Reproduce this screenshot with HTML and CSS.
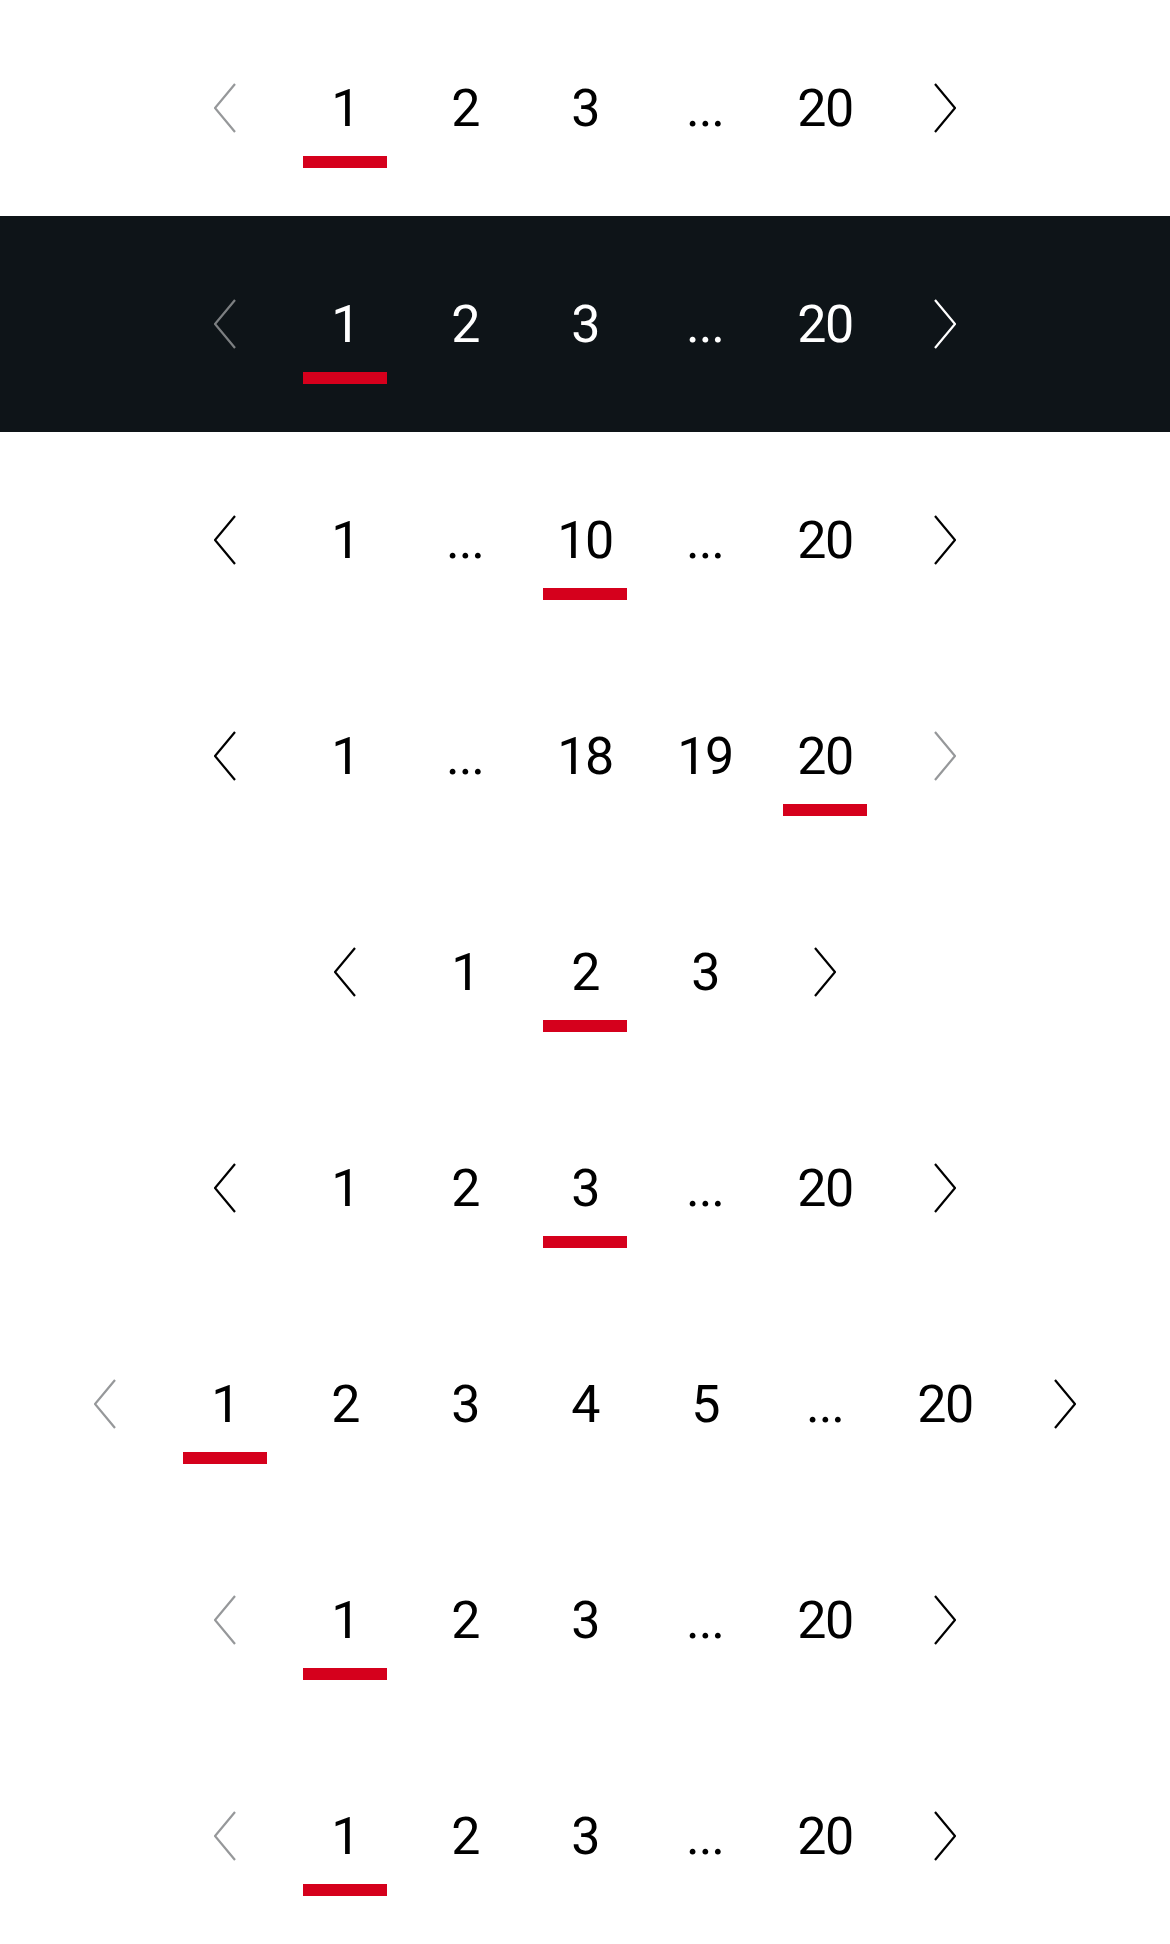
FILE: index.html
```html
<!DOCTYPE html>
<html lang="en">
<head>
<meta charset="utf-8">
<title>Pagination</title>
<link rel="stylesheet" href="styles.css">
</head>
<body>
<main class="page">

  <nav class="pagination">
    <span class="item arrow disabled"><svg class="chev" viewBox="0 0 22 50"><path d="M21 1 L1 25 L21 49"/></svg></span>
    <span class="item current">1</span>
    <span class="item">2</span>
    <span class="item">3</span>
    <span class="item ellipsis">...</span>
    <span class="item">20</span>
    <span class="item arrow"><svg class="chev" viewBox="0 0 22 50"><path d="M1 1 L21 25 L1 49"/></svg></span>
  </nav>

  <nav class="pagination dark">
    <span class="item arrow disabled"><svg class="chev" viewBox="0 0 22 50"><path d="M21 1 L1 25 L21 49"/></svg></span>
    <span class="item current">1</span>
    <span class="item">2</span>
    <span class="item">3</span>
    <span class="item ellipsis">...</span>
    <span class="item">20</span>
    <span class="item arrow"><svg class="chev" viewBox="0 0 22 50"><path d="M1 1 L21 25 L1 49"/></svg></span>
  </nav>

  <nav class="pagination">
    <span class="item arrow"><svg class="chev" viewBox="0 0 22 50"><path d="M21 1 L1 25 L21 49"/></svg></span>
    <span class="item">1</span>
    <span class="item ellipsis">...</span>
    <span class="item current">10</span>
    <span class="item ellipsis">...</span>
    <span class="item">20</span>
    <span class="item arrow"><svg class="chev" viewBox="0 0 22 50"><path d="M1 1 L21 25 L1 49"/></svg></span>
  </nav>

  <nav class="pagination">
    <span class="item arrow"><svg class="chev" viewBox="0 0 22 50"><path d="M21 1 L1 25 L21 49"/></svg></span>
    <span class="item">1</span>
    <span class="item ellipsis">...</span>
    <span class="item">18</span>
    <span class="item">19</span>
    <span class="item current">20</span>
    <span class="item arrow disabled"><svg class="chev" viewBox="0 0 22 50"><path d="M1 1 L21 25 L1 49"/></svg></span>
  </nav>

  <nav class="pagination">
    <span class="item arrow"><svg class="chev" viewBox="0 0 22 50"><path d="M21 1 L1 25 L21 49"/></svg></span>
    <span class="item">1</span>
    <span class="item current">2</span>
    <span class="item">3</span>
    <span class="item arrow"><svg class="chev" viewBox="0 0 22 50"><path d="M1 1 L21 25 L1 49"/></svg></span>
  </nav>

  <nav class="pagination">
    <span class="item arrow"><svg class="chev" viewBox="0 0 22 50"><path d="M21 1 L1 25 L21 49"/></svg></span>
    <span class="item">1</span>
    <span class="item">2</span>
    <span class="item current">3</span>
    <span class="item ellipsis">...</span>
    <span class="item">20</span>
    <span class="item arrow"><svg class="chev" viewBox="0 0 22 50"><path d="M1 1 L21 25 L1 49"/></svg></span>
  </nav>

  <nav class="pagination">
    <span class="item arrow disabled"><svg class="chev" viewBox="0 0 22 50"><path d="M21 1 L1 25 L21 49"/></svg></span>
    <span class="item current">1</span>
    <span class="item">2</span>
    <span class="item">3</span>
    <span class="item">4</span>
    <span class="item">5</span>
    <span class="item ellipsis">...</span>
    <span class="item">20</span>
    <span class="item arrow"><svg class="chev" viewBox="0 0 22 50"><path d="M1 1 L21 25 L1 49"/></svg></span>
  </nav>

  <nav class="pagination">
    <span class="item arrow disabled"><svg class="chev" viewBox="0 0 22 50"><path d="M21 1 L1 25 L21 49"/></svg></span>
    <span class="item current">1</span>
    <span class="item">2</span>
    <span class="item">3</span>
    <span class="item ellipsis">...</span>
    <span class="item">20</span>
    <span class="item arrow"><svg class="chev" viewBox="0 0 22 50"><path d="M1 1 L21 25 L1 49"/></svg></span>
  </nav>

  <nav class="pagination">
    <span class="item arrow disabled"><svg class="chev" viewBox="0 0 22 50"><path d="M21 1 L1 25 L21 49"/></svg></span>
    <span class="item current">1</span>
    <span class="item">2</span>
    <span class="item">3</span>
    <span class="item ellipsis">...</span>
    <span class="item">20</span>
    <span class="item arrow"><svg class="chev" viewBox="0 0 22 50"><path d="M1 1 L21 25 L1 49"/></svg></span>
  </nav>

</main>
</body>
</html>
```

FILE: styles.css
```css
html, body {
  margin: 0;
  padding: 0;
  background: #ffffff;
}

.page {
  width: 1170px;
  display: flex;
  flex-direction: column;
}

.pagination {
  height: 216px;
  display: flex;
  justify-content: center;
  align-items: center;
  gap: 36px;
  background: #ffffff;
  color: #000000;
  font-family: Roboto, "Liberation Sans", sans-serif;
  font-size: 52px;
  font-weight: 400;
}

.pagination.dark {
  background: #0e1418;
  color: #ffffff;
}

.item {
  box-sizing: border-box;
  width: 84px;
  height: 120px;
  padding-top: 14px;
  line-height: 94px;
  border-bottom: 12px solid transparent;
  display: flex;
  justify-content: center;
  align-items: center;
  letter-spacing: -1.5px;
}

.item.arrow {
  padding-top: 12px;
}

.item.current {
  border-bottom-color: #d5001c;
}

.ellipsis {
  letter-spacing: -1px;
}

.chev {
  width: 22px;
  height: 50px;
  fill: none;
  stroke: currentColor;
  stroke-width: 2.2px;
}

.item.disabled {
  color: #96989a;
}

.dark .item.disabled {
  color: #7c7f81;
}
```
